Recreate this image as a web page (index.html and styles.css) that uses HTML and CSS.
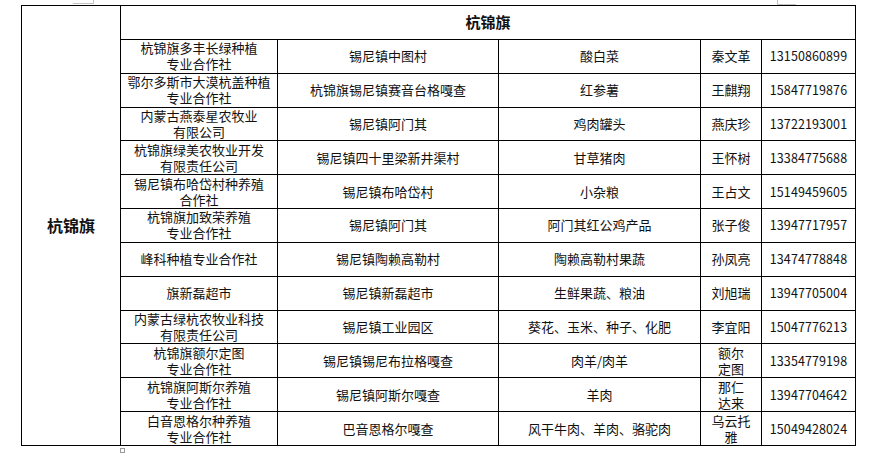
FILE: index.html
```html
<!DOCTYPE html>
<html lang="zh-CN">
<head>
<meta charset="utf-8">
<title>杭锦旗</title>
<link rel="stylesheet" href="styles.css">
</head>
<body>
<div class="page">
  <span class="mark mark-tl"></span>
  <span class="mark mark-tr"></span>
  <table class="grid">
    <colgroup>
      <col class="c-region">
      <col class="c-company">
      <col class="c-address">
      <col class="c-product">
      <col class="c-name">
      <col class="c-phone">
    </colgroup>
    <tbody>
      <tr>
        <td class="region" rowspan="13">杭锦旗</td>
        <td class="title" colspan="5">杭锦旗</td>
      </tr>
      <tr><td>杭锦旗多丰长绿种植<br>专业合作社</td><td>锡尼镇中图村</td><td>酸白菜</td><td>秦文革</td><td class="phone">13150860899</td></tr>
      <tr><td>鄂尔多斯市大漠杭盖种植<br>专业合作社</td><td>杭锦旗锡尼镇赛音台格嘎查</td><td>红参薯</td><td>王麒翔</td><td class="phone">15847719876</td></tr>
      <tr><td>内蒙古燕泰星农牧业<br>有限公司</td><td>锡尼镇阿门其</td><td>鸡肉罐头</td><td>燕庆珍</td><td class="phone">13722193001</td></tr>
      <tr><td>杭锦旗绿美农牧业开发<br>有限责任公司</td><td>锡尼镇四十里梁新井渠村</td><td>甘草猪肉</td><td>王怀树</td><td class="phone">13384775688</td></tr>
      <tr><td>锡尼镇布哈岱村种养殖<br>合作社</td><td>锡尼镇布哈岱村</td><td>小杂粮</td><td>王占文</td><td class="phone">15149459605</td></tr>
      <tr><td>杭锦旗加致荣养殖<br>专业合作社</td><td>锡尼镇阿门其</td><td>阿门其红公鸡产品</td><td>张子俊</td><td class="phone">13947717957</td></tr>
      <tr><td>峰科种植专业合作社</td><td>锡尼镇陶赖高勒村</td><td>陶赖高勒村果蔬</td><td>孙凤亮</td><td class="phone">13474778848</td></tr>
      <tr><td>旗新磊超市</td><td>锡尼镇新磊超市</td><td>生鲜果蔬、粮油</td><td>刘旭瑞</td><td class="phone">13947705004</td></tr>
      <tr><td>内蒙古绿杭农牧业科技<br>有限责任公司</td><td>锡尼镇工业园区</td><td>葵花、玉米、种子、化肥</td><td>李宜阳</td><td class="phone">15047776213</td></tr>
      <tr><td>杭锦旗额尔定图<br>专业合作社</td><td>锡尼镇锡尼布拉格嘎查</td><td>肉羊/肉羊</td><td>额尔<br>定图</td><td class="phone">13354779198</td></tr>
      <tr><td>杭锦旗阿斯尔养殖<br>专业合作社</td><td>锡尼镇阿斯尔嘎查</td><td>羊肉</td><td>那仁<br>达来</td><td class="phone">13947704642</td></tr>
      <tr><td>白音恩格尔种养殖<br>专业合作社</td><td>巴音恩格尔嘎查</td><td>风干牛肉、羊肉、骆驼肉</td><td>乌云托<br>雅</td><td class="phone">15049428024</td></tr>
    </tbody>
  </table>
  <div class="para-mark"></div>
</div>
</body>
</html>
```

FILE: styles.css
```css
html, body {
  margin: 0;
  padding: 0;
  background: #ffffff;
}

body {
  font-family: "Noto Sans CJK SC", "Liberation Sans", sans-serif;
  font-size: 13px;
  color: #111111;
}

.page {
  position: relative;
  width: 879px;
  height: 454px;
  padding: 5px 0 0 21px;
  box-sizing: border-box;
}

.mark {
  position: absolute;
  top: 0;
  border-color: #c4c4c4;
  border-style: solid;
  border-width: 0;
}

.mark-tl {
  left: 73px;
  width: 20px;
  height: 3px;
  border-bottom-width: 1px;
  border-right-width: 1px;
}

.mark-tr {
  left: 777px;
  width: 18px;
  height: 4px;
  border-bottom-width: 1px;
  border-left-width: 1px;
}

.grid {
  border-collapse: collapse;
  table-layout: fixed;
  width: 834px;
}

.c-region { width: 99px; }
.c-company { width: 157px; }
.c-address { width: 221px; }
.c-product { width: 202px; }
.c-name { width: 61px; }
.c-phone { width: 94px; }

.grid tr {
  height: 33.85px;
}

.grid td {
  border: 1px solid #000000;
  padding: 0;
  text-align: center;
  vertical-align: middle;
  line-height: 16px;
  white-space: nowrap;
}

.grid td.region {
  font-size: 16px;
  font-weight: bold;
}

.grid td.title {
  font-size: 15px;
  font-weight: bold;
}

.grid td.phone {
  font-size: 12.5px;
  letter-spacing: 0.1px;
}

.para-mark {
  width: 5px;
  height: 5px;
  margin: 2px 0 0 99px;
  border: 1px solid #9a9a9a;
  box-sizing: border-box;
}
```
